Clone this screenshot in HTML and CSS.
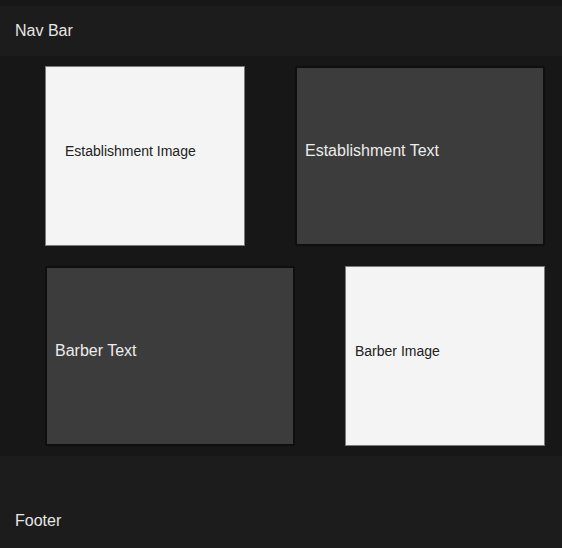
FILE: index.html
```html
<!DOCTYPE html>
<html>
<head>
<meta charset="utf-8">
<link rel="stylesheet" href="styles.css">
</head>
<body>
<nav class="navbar">Nav Bar</nav>
<main class="content">
  <div class="row row-first">
    <div class="card card-image card-image-wide">Establishment Image</div>
    <div class="card card-text">Establishment Text</div>
  </div>
  <div class="row row-second">
    <div class="card card-text">Barber Text</div>
    <div class="card card-image">Barber Image</div>
  </div>
</main>
<footer class="footer">Footer</footer>
</body>
</html>
```
FILE: styles.css
```css
html, body {
  margin: 0;
  padding: 0;
}
body {
  background: #171717;
  font-family: "Liberation Sans", Arial, sans-serif;
  color: #e6e6e6;
  padding-top: 6px;
}
.navbar {
  height: 50px;
  background: #1c1c1c;
  display: flex;
  align-items: center;
  padding-left: 15px;
  font-size: 16px;
  color: #e6e6e6;
}
.content {
  padding: 10px 0 10px 45px;
  display: flex;
  flex-direction: column;
  gap: 20px;
}
.row {
  display: flex;
  width: 500px;
  justify-content: space-between;
}
.card {
  box-sizing: border-box;
  height: 180px;
  display: flex;
  align-items: center;
  padding-bottom: 10px;
}
.card-image {
  width: 200px;
  background: #f4f4f4;
  border: 1px solid #7a7a7a;
  color: #222;
  font-size: 14px;
  padding-left: 9px;
}
.card-image-wide {
  padding-left: 19px;
}
.card-text {
  width: 250px;
  background: #3c3c3c;
  border: 2px solid #0f0f0f;
  color: #ececec;
  font-size: 16px;
  padding-left: 8px;
}
.footer {
  background: #1c1c1c;
  height: 92px;
  box-sizing: border-box;
  padding: 56px 0 0 15px;
  font-size: 16px;
  color: #e6e6e6;
}
```
